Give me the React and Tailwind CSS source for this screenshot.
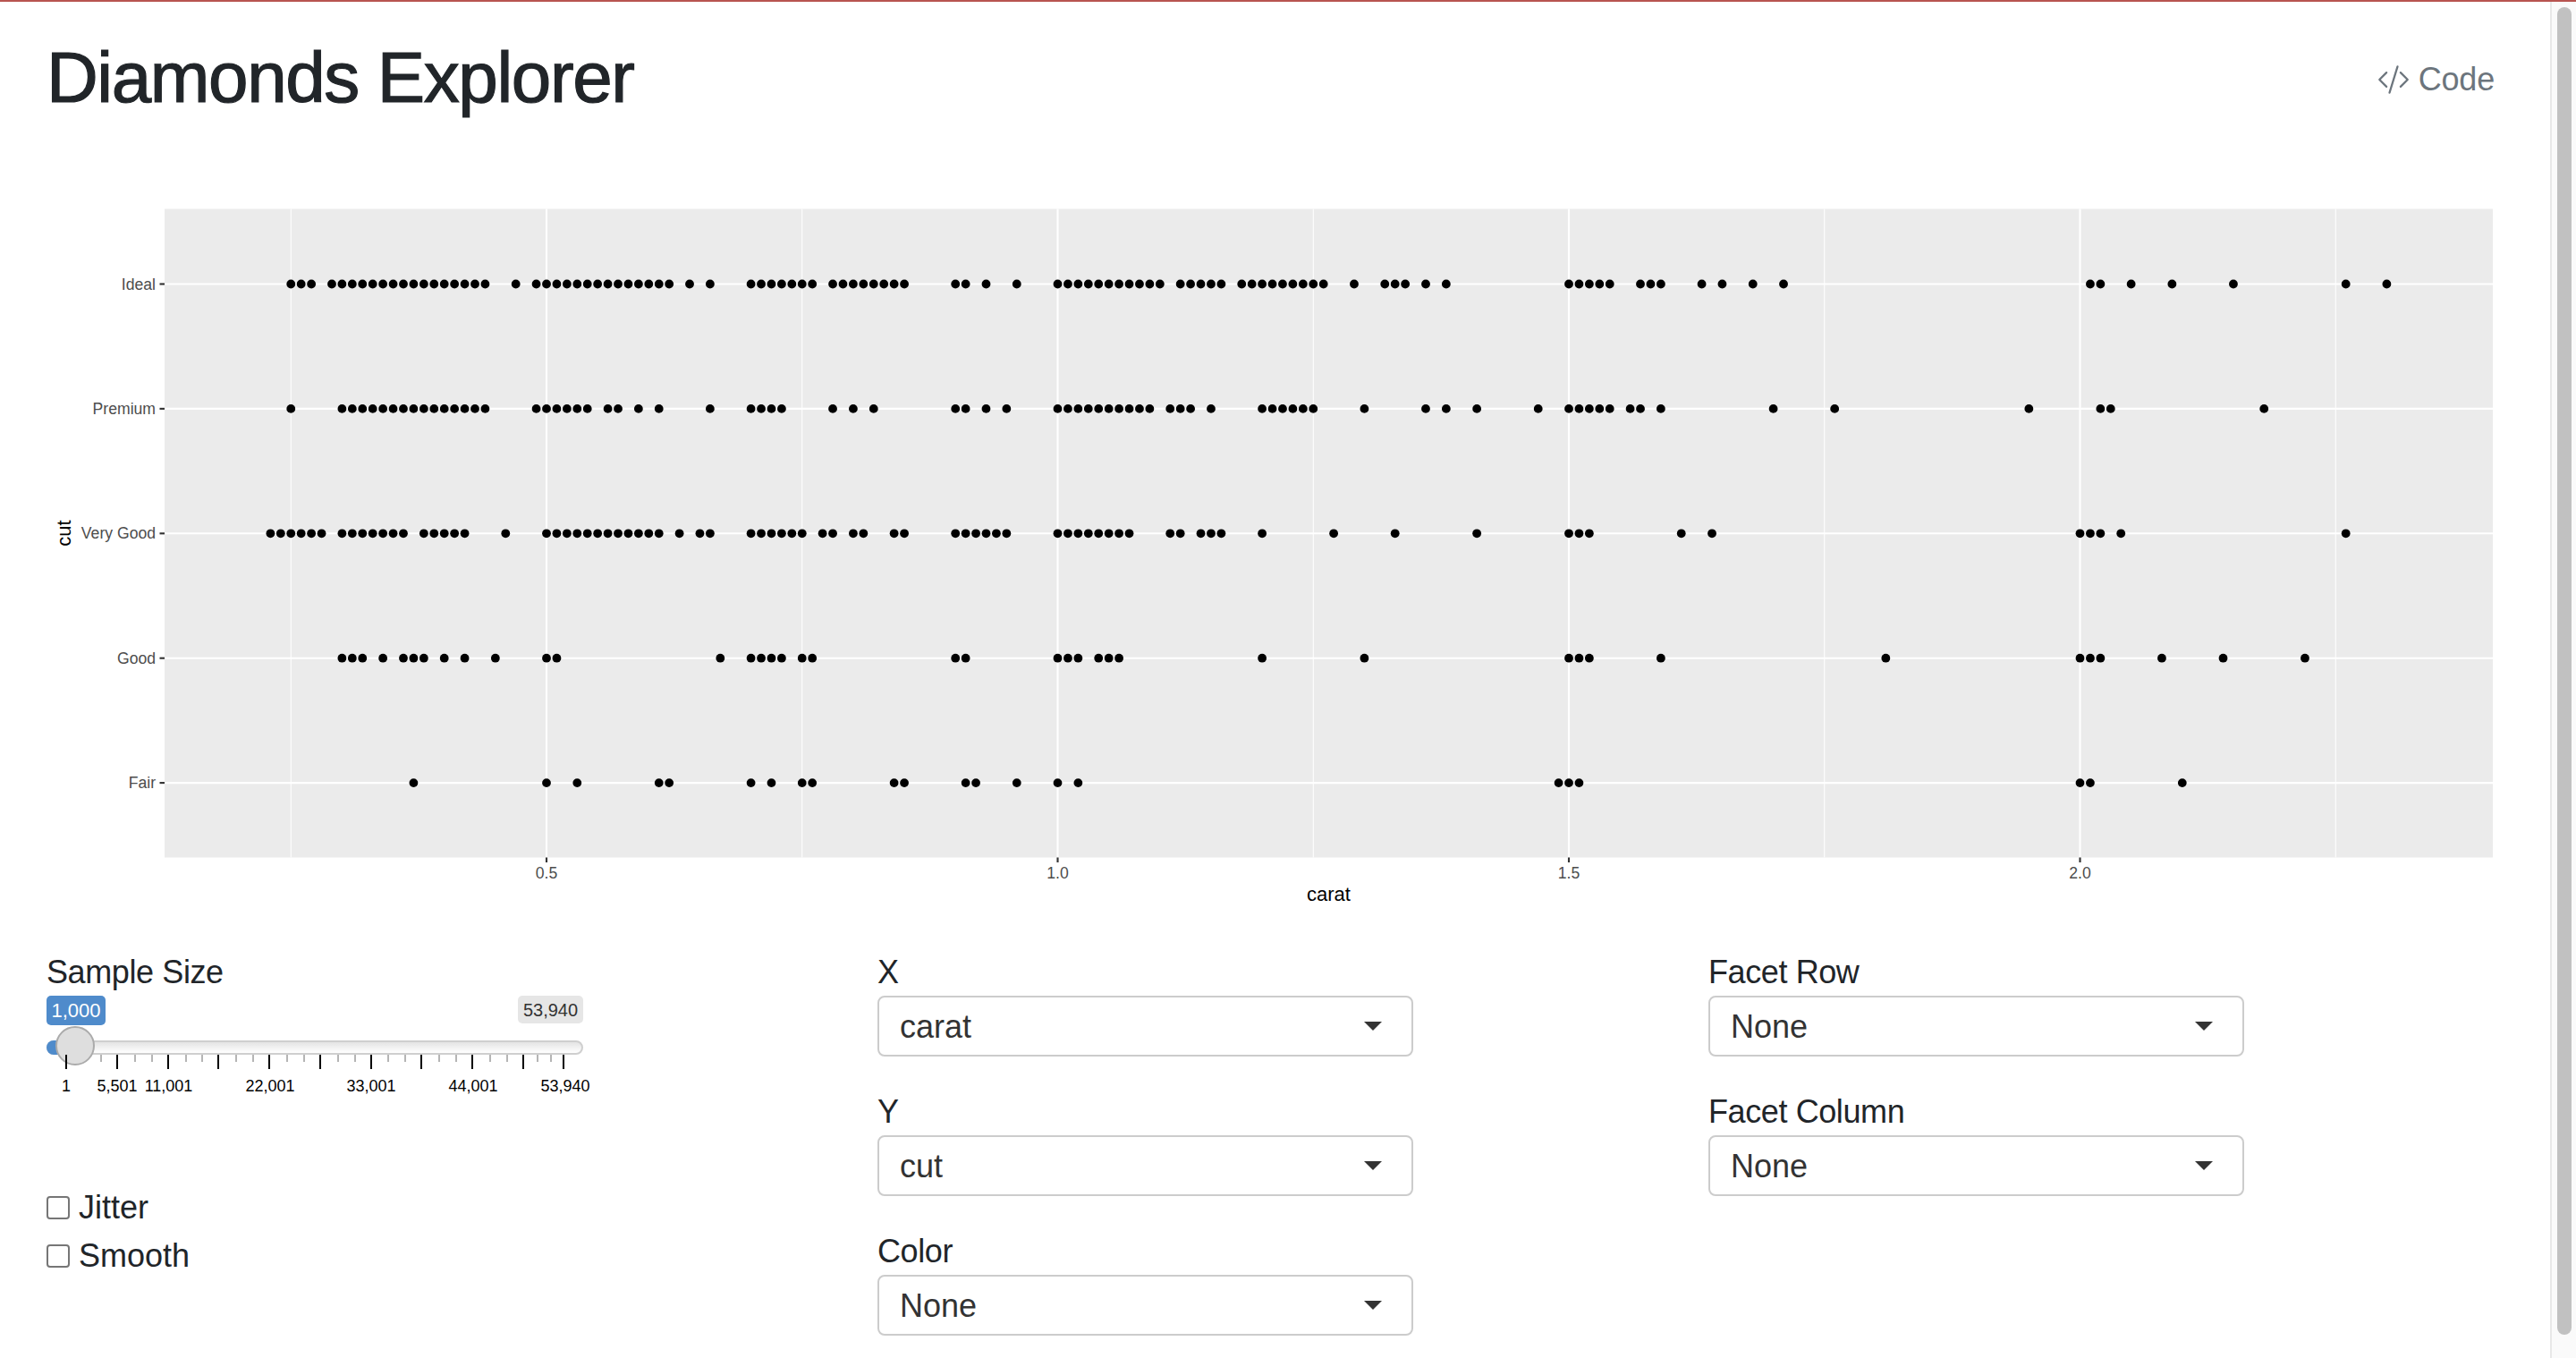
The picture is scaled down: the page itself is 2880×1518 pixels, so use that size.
import React from 'react';
import { BsCodeSlash } from 'react-icons/bs';

// carat values are kept in hundredths, r() expands a run of them
const r = (a, b) => Array.from({ length: b - a + 1 }, (_, i) => a + i);

const rows = [
  { label: 'Ideal', y: 317.5, pts: [...r(25, 27), ...r(29, 44), 47, ...r(49, 62), 64, 66, ...r(70, 76), ...r(78, 85), 90, 91, 93, 96, ...r(100, 110), ...r(112, 116), ...r(118, 126), 129, ...r(132, 134), 136, 138, ...r(150, 154), ...r(157, 159), 163, 165, 168, 171, 201, 202, 205, 209, 215, 226, 230] },
  { label: 'Premium', y: 456.9, pts: [25, ...r(30, 44), ...r(49, 54), 56, 57, 59, 61, 66, ...r(70, 73), 78, 80, 82, 90, 91, 93, 95, ...r(100, 109), ...r(111, 113), 115, ...r(120, 125), 130, 136, 138, 141, 147, ...r(150, 154), 156, 157, 159, 170, 176, 195, 202, 203, 218] },
  { label: 'Very Good', y: 596.3, pts: [...r(23, 28), ...r(30, 36), ...r(38, 42), 46, ...r(50, 61), 63, 65, 66, ...r(70, 75), 77, 78, 80, 81, 84, 85, ...r(90, 95), ...r(100, 107), 111, 112, 114, 115, 116, 120, 127, 133, 141, 150, 151, 152, 161, 164, 200, 201, 202, 204, 226] },
  { label: 'Good', y: 735.7, pts: [30, 31, 32, 34, 36, 37, 38, 40, 42, 45, 50, 51, 67, ...r(70, 73), 75, 76, 90, 91, 100, 101, 102, 104, 105, 106, 120, 130, 150, 151, 152, 159, 181, 200, 201, 202, 208, 214, 222] },
  { label: 'Fair', y: 875.1, pts: [37, 50, 53, 61, 62, 70, 72, 75, 76, 84, 85, 91, 92, 96, 100, 102, 149, 150, 151, 200, 201, 210] },
];

const xPos = (c) => 611 + (c - 0.5) * 1143;

const Plot = () => (
  <svg width="2747" height="800" viewBox="52 222 2747 800" className="block mt-[87px] font-['Liberation_Sans',sans-serif]">
    <rect x="184" y="233.5" width="2603" height="725" fill="#ebebeb" />
    {[0.25, 0.75, 1.25, 1.75, 2.25].map((c) => (
      <line key={c} x1={xPos(c)} x2={xPos(c)} y1="233.5" y2="958.5" stroke="#fff" strokeWidth="1.07" />
    ))}
    {[0.5, 1, 1.5, 2].map((c) => (
      <line key={c} x1={xPos(c)} x2={xPos(c)} y1="233.5" y2="958.5" stroke="#fff" strokeWidth="2.13" />
    ))}
    {rows.map((row) => (
      <g key={row.label}>
        <line x1="184" x2="2787" y1={row.y} y2={row.y} stroke="#fff" strokeWidth="2.13" />
        <line x1="178.5" x2="184" y1={row.y} y2={row.y} stroke="#333" strokeWidth="2.13" />
        <text x="174" y={row.y + 6} textAnchor="end" fontSize="17.6" fill="#4d4d4d">{row.label}</text>
        {row.pts.map((p) => (
          <circle key={p} cx={xPos(p / 100)} cy={row.y} r="4.9" fill="#000" />
        ))}
      </g>
    ))}
    {[0.5, 1, 1.5, 2].map((c) => (
      <g key={c}>
        <line x1={xPos(c)} x2={xPos(c)} y1="958.5" y2="964" stroke="#333" strokeWidth="2.13" />
        <text x={xPos(c)} y="982" textAnchor="middle" fontSize="17.6" fill="#4d4d4d">{c.toFixed(1)}</text>
      </g>
    ))}
    <text x="1485.5" y="1006.5" textAnchor="middle" fontSize="22" fill="#000">carat</text>
    <text x="79" y="596" textAnchor="middle" fontSize="22" fill="#000" transform="rotate(-90 79 596)">cut</text>
  </svg>
);

const Field = ({ label, value }) => (
  <div className="mb-[39px]">
    <label className="block h-[46px] leading-[46px] mb-[3px] text-[36px] tracking-[-0.4px] text-[#212529]">{label}</label>
    <div className="flex items-center justify-between w-[599px] h-[68px] pl-[23px] pr-[33px] pt-[2px] border-2 border-[#cccccc] rounded-[8px] bg-white text-[36px] text-[#333333]">
      <span>{value}</span>
      <svg width="20" height="10" viewBox="0 0 20 10" className="mb-[3px]"><polygon points="0,0 20,0 10,10" fill="#333" /></svg>
    </div>
  </div>
);

const majorTicks = [74, 131, 188, 244, 301, 358, 415, 471, 528, 585, 630];
const minorTicks = [112, 150, 169, 207, 225, 263, 282, 320, 339, 377, 396, 433, 452, 490, 509, 547, 566, 600, 615];
const tickLabels = [
  ['1', 74], ['5,501', 131], ['11,001', 188.5], ['22,001', 302], ['33,001', 415], ['44,001', 529], ['53,940', 632],
];

const Slider = () => (
  <div className="relative w-[600px] h-[112px] mt-[3px]">
    <span className="absolute left-0 top-0 h-[33px] w-[66px] flex items-center justify-center rounded-[5px] bg-[#4f8bcb] text-white text-[22px]">1,000</span>
    <span className="absolute right-0 top-0 h-[31px] w-[73px] flex items-center justify-center rounded-[5px] bg-[#e6e6e6] text-[#333333] text-[20px]">53,940</span>
    <div className="absolute left-0 right-0 top-[50px] h-[16px] rounded-full border-2 border-[#cfcfcf] bg-gradient-to-b from-[#e4e4e4] to-white" />
    <div className="absolute left-0 top-[50px] w-[30px] h-[16px] rounded-l-full bg-[#4f8bcb]" />
    <div className="absolute left-[10px] top-[34px] w-[44px] h-[44px] rounded-full border-2 border-[#ababab] bg-[#dedede]" />
    {minorTicks.map((x) => (
      <div key={x} className="absolute top-[66px] w-[2px] h-[8px] bg-[#b5b5b5]" style={{ left: x - 52 }} />
    ))}
    {majorTicks.map((x) => (
      <div key={x} className="absolute top-[66px] w-[2px] h-[16px] bg-black" style={{ left: x - 53 }} />
    ))}
    {tickLabels.map(([t, x]) => (
      <span key={t} className="absolute top-[90px] -translate-x-1/2 text-[18px] leading-[22px] text-black" style={{ left: x - 52 }}>{t}</span>
    ))}
  </div>
);

const Check = ({ label }) => (
  <label className="flex items-center h-[54px] text-[36px] text-[#212529]">
    <input type="checkbox" className="appearance-none w-[26px] h-[26px] mr-[10px] border-2 border-[#767676] rounded-[4px] bg-white" />
    {label}
  </label>
);

export default function App() {
  return (
    <div className="h-[1518px] overflow-hidden bg-white border-t-2 border-[#b85450] flex font-['Liberation_Sans',sans-serif]">
      <main className="w-[2851px] pl-[52px]">
        <header className="flex items-center justify-between w-[2747px] h-[96px] mt-[37px] pr-[10px]">
          <h1 className="text-[80px] leading-[96px] tracking-[-1.4px] text-[#212529] [-webkit-text-stroke:1.2px_#212529]">Diamonds Explorer</h1>
          <a className="flex items-center gap-[10px] mt-[3px] text-[36px] tracking-[-0.2px] text-[#6c757d]">
            <BsCodeSlash size={36} />
            Code
          </a>
        </header>
        <Plot />
        <div className="grid grid-cols-[929px_929px_889px] mt-[42px]">
          <div>
            <label className="block h-[46px] leading-[46px] text-[36px] tracking-[-0.4px] text-[#212529]">Sample Size</label>
            <Slider />
            <div className="mt-[98px]">
              <Check label="Jitter" />
              <Check label="Smooth" />
            </div>
          </div>
          <div>
            <Field label="X" value="carat" />
            <Field label="Y" value="cut" />
            <Field label="Color" value="None" />
          </div>
          <div>
            <Field label="Facet Row" value="None" />
            <Field label="Facet Column" value="None" />
          </div>
        </div>
      </main>
      <aside className="w-[29px] pl-[6px] pt-[6px] bg-[#fafafa] border-l-2 border-[#e8e8e8]">
        <div className="w-[16px] h-[1484px] rounded-full bg-[#c1c1c1]" />
      </aside>
    </div>
  );
}
